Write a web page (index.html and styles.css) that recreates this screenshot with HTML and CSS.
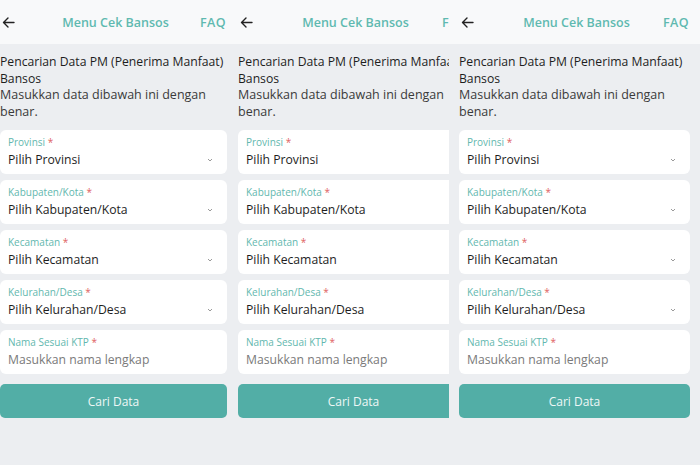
FILE: index.html
```html
<!DOCTYPE html>
<html lang="id">
<head>
  <meta charset="UTF-8">
  <title>Menu Cek Bansos</title>
  <link rel="stylesheet" href="styles.css">
</head>
<body>
  <div class="strip">

    <div class="frame frame-1">
      <div class="screen">
        <header class="topbar">
          <svg class="back" width="13" height="11" viewBox="0 0 13 11"><path d="M12 5.5H1.5M6 1L1.5 5.5L6 10" fill="none" stroke="#222" stroke-width="1.4" stroke-linecap="round" stroke-linejoin="round"/></svg>
          <span class="title">Menu Cek Bansos</span>
          <span class="faq">FAQ</span>
        </header>
        <main class="content">
          <h1 class="heading">Pencarian Data PM (Penerima Manfaat) Bansos</h1>
          <p class="desc">Masukkan data dibawah ini dengan benar.</p>
          <div class="field"><label>Provinsi <b>*</b></label><div class="value">Pilih Provinsi<svg class="chev" width="6" height="4" viewBox="0 0 6 4"><path d="M1 1L3 3L5 1" fill="none" stroke="#9a9a9a" stroke-width="1"/></svg></div></div>
          <div class="field"><label>Kabupaten/Kota <b>*</b></label><div class="value">Pilih Kabupaten/Kota<svg class="chev" width="6" height="4" viewBox="0 0 6 4"><path d="M1 1L3 3L5 1" fill="none" stroke="#9a9a9a" stroke-width="1"/></svg></div></div>
          <div class="field"><label>Kecamatan <b>*</b></label><div class="value">Pilih Kecamatan<svg class="chev" width="6" height="4" viewBox="0 0 6 4"><path d="M1 1L3 3L5 1" fill="none" stroke="#9a9a9a" stroke-width="1"/></svg></div></div>
          <div class="field"><label>Kelurahan/Desa <b>*</b></label><div class="value">Pilih Kelurahan/Desa<svg class="chev" width="6" height="4" viewBox="0 0 6 4"><path d="M1 1L3 3L5 1" fill="none" stroke="#9a9a9a" stroke-width="1"/></svg></div></div>
          <div class="field"><label>Nama Sesuai KTP <b>*</b></label><div class="value placeholder">Masukkan nama lengkap</div></div>
          <button class="btn">Cari Data</button>
        </main>
      </div>
    </div>

    <div class="frame frame-2">
      <div class="screen">
        <header class="topbar">
          <svg class="back" width="13" height="11" viewBox="0 0 13 11"><path d="M12 5.5H1.5M6 1L1.5 5.5L6 10" fill="none" stroke="#222" stroke-width="1.4" stroke-linecap="round" stroke-linejoin="round"/></svg>
          <span class="title">Menu Cek Bansos</span>
          <span class="faq">FAQ</span>
        </header>
        <main class="content">
          <h1 class="heading">Pencarian Data PM (Penerima Manfaat) Bansos</h1>
          <p class="desc">Masukkan data dibawah ini dengan benar.</p>
          <div class="field"><label>Provinsi <b>*</b></label><div class="value">Pilih Provinsi<svg class="chev" width="6" height="4" viewBox="0 0 6 4"><path d="M1 1L3 3L5 1" fill="none" stroke="#9a9a9a" stroke-width="1"/></svg></div></div>
          <div class="field"><label>Kabupaten/Kota <b>*</b></label><div class="value">Pilih Kabupaten/Kota<svg class="chev" width="6" height="4" viewBox="0 0 6 4"><path d="M1 1L3 3L5 1" fill="none" stroke="#9a9a9a" stroke-width="1"/></svg></div></div>
          <div class="field"><label>Kecamatan <b>*</b></label><div class="value">Pilih Kecamatan<svg class="chev" width="6" height="4" viewBox="0 0 6 4"><path d="M1 1L3 3L5 1" fill="none" stroke="#9a9a9a" stroke-width="1"/></svg></div></div>
          <div class="field"><label>Kelurahan/Desa <b>*</b></label><div class="value">Pilih Kelurahan/Desa<svg class="chev" width="6" height="4" viewBox="0 0 6 4"><path d="M1 1L3 3L5 1" fill="none" stroke="#9a9a9a" stroke-width="1"/></svg></div></div>
          <div class="field"><label>Nama Sesuai KTP <b>*</b></label><div class="value placeholder">Masukkan nama lengkap</div></div>
          <button class="btn">Cari Data</button>
        </main>
      </div>
    </div>

    <div class="frame frame-3">
      <div class="screen">
        <header class="topbar">
          <svg class="back" width="13" height="11" viewBox="0 0 13 11"><path d="M12 5.5H1.5M6 1L1.5 5.5L6 10" fill="none" stroke="#222" stroke-width="1.4" stroke-linecap="round" stroke-linejoin="round"/></svg>
          <span class="title">Menu Cek Bansos</span>
          <span class="faq">FAQ</span>
        </header>
        <main class="content">
          <h1 class="heading">Pencarian Data PM (Penerima Manfaat) Bansos</h1>
          <p class="desc">Masukkan data dibawah ini dengan benar.</p>
          <div class="field"><label>Provinsi <b>*</b></label><div class="value">Pilih Provinsi<svg class="chev" width="6" height="4" viewBox="0 0 6 4"><path d="M1 1L3 3L5 1" fill="none" stroke="#9a9a9a" stroke-width="1"/></svg></div></div>
          <div class="field"><label>Kabupaten/Kota <b>*</b></label><div class="value">Pilih Kabupaten/Kota<svg class="chev" width="6" height="4" viewBox="0 0 6 4"><path d="M1 1L3 3L5 1" fill="none" stroke="#9a9a9a" stroke-width="1"/></svg></div></div>
          <div class="field"><label>Kecamatan <b>*</b></label><div class="value">Pilih Kecamatan<svg class="chev" width="6" height="4" viewBox="0 0 6 4"><path d="M1 1L3 3L5 1" fill="none" stroke="#9a9a9a" stroke-width="1"/></svg></div></div>
          <div class="field"><label>Kelurahan/Desa <b>*</b></label><div class="value">Pilih Kelurahan/Desa<svg class="chev" width="6" height="4" viewBox="0 0 6 4"><path d="M1 1L3 3L5 1" fill="none" stroke="#9a9a9a" stroke-width="1"/></svg></div></div>
          <div class="field"><label>Nama Sesuai KTP <b>*</b></label><div class="value placeholder">Masukkan nama lengkap</div></div>
          <button class="btn">Cari Data</button>
        </main>
      </div>
    </div>

  </div>
</body>
</html>
```

FILE: styles.css
```css
* {
  box-sizing: border-box;
}
body {
  margin: 0;
  font-family: "Open Sans", "Noto Sans", sans-serif;
  background: #eceef1;
  color: #222;
}
.strip {
  display: flex;
  width: 700px;
  height: 465px;
  overflow: hidden;
}
.frame {
  flex: none;
  overflow: hidden;
  height: 465px;
}
.frame-1 {
  width: 228px;
}
.frame-1 .screen {
  width: 247px;
  margin-left: -10px;
}
.frame-2 {
  width: 221px;
}
.frame-3 {
  width: 251px;
}
.screen {
  width: 251px;
  height: 465px;
  display: flex;
  flex-direction: column;
  background: #eceef1;
}
.topbar {
  height: 44px;
  flex: none;
  background: #f8f9fa;
  display: flex;
  align-items: center;
  justify-content: space-between;
  padding: 0 11px 0 12px;
}
.back {
  display: block;
}
.title, .faq {
  color: #5fb9b0;
  font-size: 12.5px;
  font-weight: 600;
}
.title {
  margin-left: 16px;
}
.faq {
  letter-spacing: 0.4px;
}
.content {
  padding: 10px 10px 0;
  display: flex;
  flex-direction: column;
}
.heading {
  margin: 0;
  font-size: 12.2px;
  font-weight: 400;
  line-height: 16.5px;
  color: #1e1e1e;
}
.desc {
  margin: 0 0 10px;
  font-size: 12.5px;
  line-height: 16.5px;
  color: #3a3a3a;
}
.field {
  background: #fff;
  border-radius: 6px;
  height: 44px;
  margin-bottom: 6px;
  padding: 6px 8px 0;
}
.field label {
  display: block;
  font-size: 10px;
  line-height: 12px;
  color: #62b7ae;
}
.field label b {
  color: #e06262;
  font-weight: 400;
}
.value {
  display: flex;
  align-items: center;
  justify-content: space-between;
  margin-top: 3px;
  font-size: 12.2px;
  line-height: 18px;
  color: #1e1e1e;
  padding-right: 6px;
}
.value.placeholder {
  color: #7a7a7a;
}
.btn {
  margin-top: 4px;
  height: 34px;
  border: none;
  border-radius: 5px;
  background: #52aea6;
  color: #eef7f6;
  font-family: inherit;
  font-size: 12px;
}
```
